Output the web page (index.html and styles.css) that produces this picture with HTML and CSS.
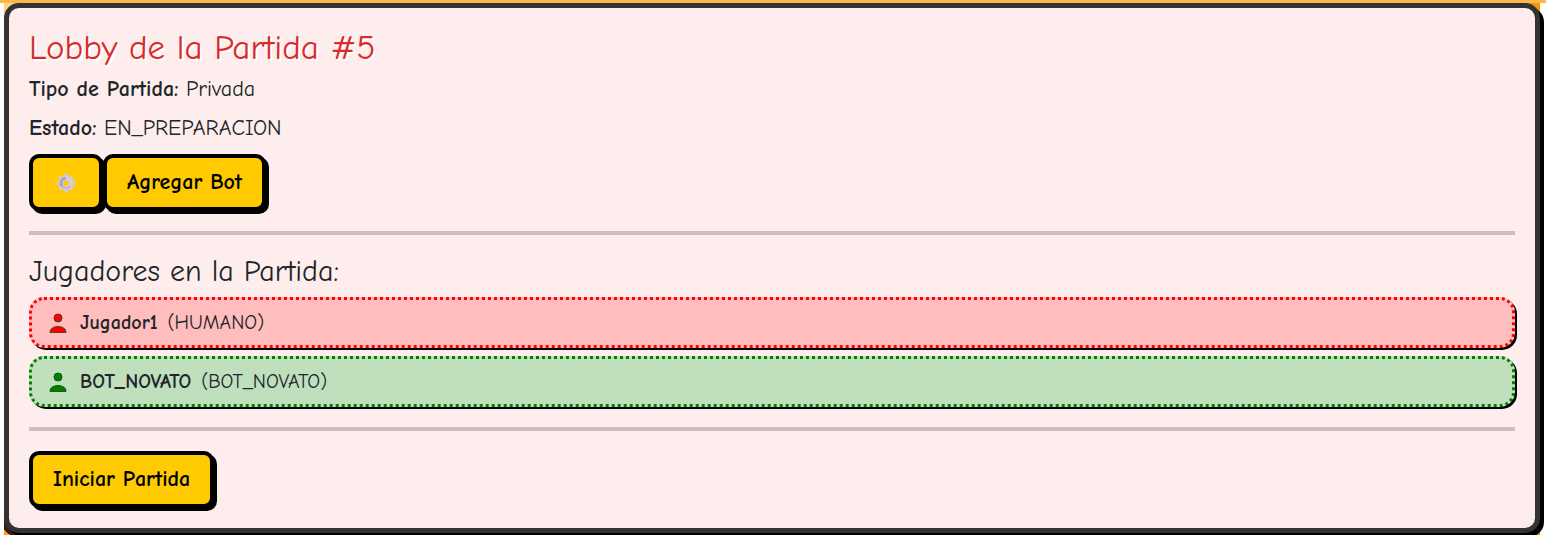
FILE: index.html
```html
<!DOCTYPE html>
<html lang="es">
<head>
<meta charset="utf-8">
<meta name="viewport" content="width=device-width, initial-scale=1">
<title>Lobby de la Partida</title>
<link rel="stylesheet" href="styles.css">
</head>
<body>
<div class="stage">
  <main class="lobby">
    <h1 class="lobby-title">Lobby de la Partida #5</h1>
    <p class="detail"><strong class="detail-name">Tipo de Partida:</strong> Privada</p>
    <p class="detail"><strong class="detail-name">Estado:</strong> EN_PREPARACION</p>
    <div class="actions">
      <button class="btn btn-icon" type="button" aria-label="Configurar">
        <svg class="gear" viewBox="0 0 20 20" aria-hidden="true">
          <g fill="none" stroke="#cfc8e0" stroke-width="3.4">
            <path d="M10 0.5V19.5M0.5 10H19.5M3.6 3.6L16.4 16.4M16.4 3.6L3.6 16.4"/>
          </g>
          <circle cx="10" cy="10" r="5" fill="#ffcb00" stroke="#d3cde3" stroke-width="4.4"/>
          <path d="M10 5A5 5 0 0 0 6 13" fill="none" stroke="#a99ccc" stroke-width="2.6"/>
          <path d="M6 13A5 5 0 0 0 14 13" fill="none" stroke="#b7acd4" stroke-width="2"/>
        </svg>
      </button>
      <button class="btn" type="button">Agregar Bot</button>
    </div>
    <hr class="rule">
    <h2 class="section-title">Jugadores en la Partida:</h2>
    <ul class="players">
      <li class="player player-human">
        <svg class="avatar" viewBox="0 0 18 20" aria-hidden="true"><circle cx="9" cy="5" r="4"/><path d="M1 19.4C1 15.8 4.2 13.6 9 13.6S17 15.8 17 19.4Z"/></svg>
        <strong class="player-name">Jugador1</strong>
        <span class="player-kind">(HUMANO)</span>
      </li>
      <li class="player player-bot">
        <svg class="avatar" viewBox="0 0 18 20" aria-hidden="true"><circle cx="9" cy="5" r="4"/><path d="M1 19.4C1 15.8 4.2 13.6 9 13.6S17 15.8 17 19.4Z"/></svg>
        <strong class="player-name">BOT_NOVATO</strong>
        <span class="player-kind">(BOT_NOVATO)</span>
      </li>
    </ul>
    <hr class="rule">
    <button class="btn" type="button">Iniciar Partida</button>
  </main>
</div>
</body>
</html>
```
FILE: styles.css
```css
* { box-sizing: border-box; }

body {
  margin: 0;
  border-top: 3px solid #ffb74d;
  background: #fff;
  color: #212529;
  font-family: "Comic Sans MS", "Comic Neue", "Open Sans", sans-serif;
  font-size: 22px;
  line-height: 27px;
  overflow: hidden;
}

.stage {
  margin: 0 6px 0 4px;
  padding-bottom: 2px;
  background:
    linear-gradient(40deg, #f9a000 0 4px, #3a1a14 4px 30px, transparent 30px),
    linear-gradient(90deg, #ffd180, #f0980c);
}

.lobby {
  padding: 20px;
  border: 5px solid #333;
  border-radius: 15px;
  background: #fdeeed;
  box-shadow: 4px 4px 0 #000;
}

.lobby-title {
  margin: 0 0 8px;
  color: #d92b2b;
  font-size: 35px;
  font-weight: 400;
  line-height: 40px;
  text-shadow: 2px 2px 0 #fff;
}

.detail { margin: 0 0 12px; }

.detail-name { font-weight: 700; }

.actions { display: flex; }

.btn {
  display: block;
  height: 57px;
  padding: 0 20px;
  border: 4px solid #000;
  border-radius: 10px;
  background: #ffcb00;
  box-shadow: 3px 3px 0 #000;
  color: #000;
  font: inherit;
  font-weight: 700;
  cursor: pointer;
}

.btn-icon { padding: 0 23px; }

.gear {
  display: block;
  width: 20px;
  height: 20px;
}

.rule {
  height: 4px;
  margin: 20px 0;
  border: 0;
  background: #cbbfbe;
}

.section-title {
  margin: 0 0 8px;
  font-size: 30px;
  font-weight: 400;
  line-height: 34px;
}

.players {
  display: grid;
  gap: 8px;
  margin: 0;
  padding: 0;
  list-style: none;
}

.player {
  display: flex;
  align-items: center;
  padding: 12px 17px;
  border: 3px dotted;
  border-radius: 15px;
  box-shadow: 2px 2px 0 #000;
  font-size: 20px;
  line-height: 21px;
}

.player-human { border-color: #f00; background: #ffbdbd; }
.player-bot { border-color: #008000; background: #bfdfbd; }

.avatar {
  width: 18px;
  height: 20px;
  margin-right: 13px;
  stroke: #5b3b10;
  stroke-width: 1;
}

.player-human .avatar { fill: #f00; }
.player-bot .avatar { fill: #008000; stroke: #0b5a0b; }

.player-name { margin-right: 10px; color: #212529; }
```
